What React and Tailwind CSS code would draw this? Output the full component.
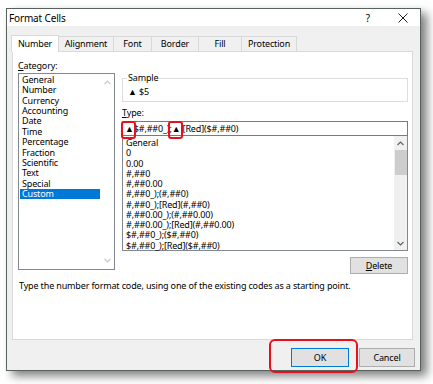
const categories = [
  "General",
  "Number",
  "Currency",
  "Accounting",
  "Date",
  "Time",
  "Percentage",
  "Fraction",
  "Scientific",
  "Text",
  "Special",
  "Custom",
];

const formats = [
  "General",
  "0",
  "0.00",
  "#,##0",
  "#,##0.00",
  "#,##0_);(#,##0)",
  "#,##0_);[Red](#,##0)",
  "#,##0.00_);(#,##0.00)",
  "#,##0.00_);[Red](#,##0.00)",
  "$#,##0_);($#,##0)",
  "$#,##0_);[Red]($#,##0)",
];

const tabs = ["Alignment", "Font", "Border", "Fill", "Protection"];
const tabWidths = ["w-[55px]", "w-[38px]", "w-[47px]", "w-[43px]", "w-[55px]"];

function Chevron({ up, color = "#606060" }) {
  return (
    <svg width="7" height="5" viewBox="0 0 7 5">
      <path
        d={up ? "M0.5 4 L3.5 1 L6.5 4" : "M0.5 1 L3.5 4 L6.5 1"}
        fill="none"
        stroke={color}
        strokeWidth="1.1"
      />
    </svg>
  );
}

export default function App() {
  return (
    <div
      className="w-[433px] h-[384px] bg-white overflow-hidden pt-[8px] pl-[6px] text-[9px] tracking-[-0.15px] text-black"
      style={{ fontFamily: '"Noto Sans", "Open Sans", sans-serif' }}
    >
      <div className="relative w-[415px] h-[363px] border border-[#56625c] bg-[#f0f0f0] shadow-[6px_5px_9px_rgba(0,0,0,0.5)] flex flex-col">
        {/* title bar */}
        <div className="h-[17px] bg-white flex items-center pl-[2px] pr-[12px]">
          <span className="text-[10px] leading-none">Format Cells</span>
          <span className="ml-auto text-[10px] leading-none mr-[28px]">?</span>
          <svg width="10" height="10" viewBox="0 0 10 10">
            <path d="M0.5 0.5 L9.5 9.5 M9.5 0.5 L0.5 9.5" stroke="#222" strokeWidth="1" />
          </svg>
        </div>

        {/* tabs */}
        <div className="flex items-end pl-[4px] mt-[8px] h-[17px]">
          <div className="w-[48px] h-[17px] bg-white border border-b-0 border-[#d9d9d9] flex items-center justify-center z-10 -mb-px pb-[1px]">
            Number
          </div>
          {tabs.map((t, i) => (
            <div
              key={t}
              className={`${tabWidths[i]} h-[15px] border border-l-0 border-b-0 border-[#d9d9d9] flex items-center justify-center`}
            >
              {t}
            </div>
          ))}
        </div>

        {/* panel */}
        <div className="ml-[5px] w-[401px] h-[289px] bg-white border border-[#d9d9d9] flex flex-col">
          <div className="flex pl-[5px] gap-[7px]">
            {/* category column */}
            <div className="flex flex-col w-[97px] pt-[8px]">
              <div className="leading-[12px]">
                <span className="underline">C</span>ategory:
              </div>
              <div className="mt-[1px] h-[197px] border border-[#828790] flex">
                <div className="flex-1 flex flex-col pt-[1px] pl-[1px]">
                  {categories.map((c) => (
                    <div
                      key={c}
                      className={`h-[10.36px] leading-[10.36px] pl-[2px] ${
                        c === "Custom" ? "bg-[#0078d7] text-white" : ""
                      }`}
                    >
                      {c}
                    </div>
                  ))}
                </div>
                <div className="w-[14px] flex flex-col items-center justify-between py-[6px]">
                  <Chevron up color="#c8c8c8" />
                  <Chevron color="#c8c8c8" />
                </div>
              </div>
            </div>

            {/* type column */}
            <div className="flex flex-col w-[286px] pt-[21px]">
              <fieldset className="border border-[#dcdcdc] h-[29px] px-[5px] min-w-0">
                <legend className="px-[1px] ml-[-1px] leading-[10px]">Sample</legend>
                <div className="leading-[12px] pt-[3px]">▲ $5</div>
              </fieldset>
              <div className="mt-[5px] leading-[12px]">
                <span className="underline">T</span>ype:
              </div>
              <div className="relative mt-[2px] h-[15px] border border-[#7a7a7a] flex items-center pl-[2px] leading-none">
                <span>▲$#,##0_);▲ [Red]($#,##0)</span>
                <div className="absolute left-[-2px] top-[-1px] w-[15px] h-[18px] border-[2.5px] border-[#e8101a] rounded-[3px]" />
                <div className="absolute left-[45px] top-[-1px] w-[15px] h-[18px] border-[2.5px] border-[#e8101a] rounded-[3px]" />
              </div>
              <div className="h-[115px] border border-[#828790] border-t-0 flex">
                <div className="flex-1 flex flex-col pt-[2px] pl-[3px]">
                  {formats.map((f) => (
                    <div key={f} className="h-[10.27px] leading-[10.27px] whitespace-nowrap">
                      {f}
                    </div>
                  ))}
                </div>
                <div className="w-[13px] bg-[#f0f0f0] flex flex-col items-center">
                  <div className="h-[14px] flex items-center">
                    <Chevron up />
                  </div>
                  <div className="w-[12px] h-[25px] bg-[#cdcdcd]" />
                  <div className="mt-auto h-[14px] flex items-center">
                    <Chevron />
                  </div>
                </div>
              </div>
              <div className="flex justify-end mt-[6px]">
                <button className="w-[58px] h-[17px] bg-[#e1e1e1] border border-[#adadad] leading-none">
                  <span className="underline">D</span>elete
                </button>
              </div>
            </div>
          </div>
          <div className="pl-[6px] mt-[6px] leading-[12px]">
            Type the number format code, using one of the existing codes as a starting point.
          </div>
        </div>

        {/* footer buttons */}
        <div className="flex justify-end gap-[10px] pr-[5px] mt-[8px]">
          <div className="relative">
            <button className="w-[58px] h-[19px] bg-[#e1e1e1] border border-[#0078d7] leading-none">
              OK
            </button>
            <div className="absolute left-[-22px] top-[-9px] w-[89px] h-[34px] border-[2.5px] border-[#e8101a] rounded-[6px]" />
          </div>
          <button className="w-[56px] h-[19px] bg-[#e1e1e1] border border-[#adadad] leading-none">
            Cancel
          </button>
        </div>
      </div>
    </div>
  );
}
